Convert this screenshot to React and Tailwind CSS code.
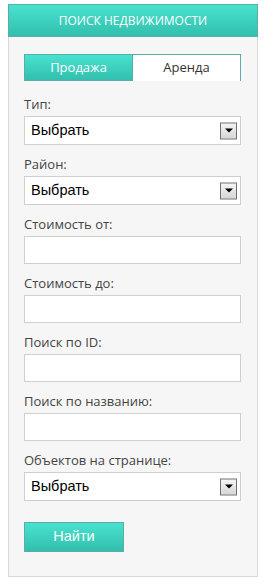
import React from 'react';

const labelFont = { fontFamily: '"Open Sans", Tahoma, "DejaVu Sans", sans-serif' };

function Arrow() {
  return (
    <div className="absolute right-[3px] top-1/2 -translate-y-1/2 w-[17px] h-[17px] border border-[#707070] bg-gradient-to-b from-[#f4f4f4] to-[#d6d6d6] flex items-center justify-center">
      <div className="w-0 h-0 border-l-[4px] border-r-[4px] border-t-[4px] border-l-transparent border-r-transparent border-t-black" />
    </div>
  );
}

function Field({ label, select, last }) {
  return (
    <div className={last ? '' : 'mb-[11px]'}>
      <div className="h-[16px] mb-[4px] text-[13px] leading-[16px] text-[#444]" style={labelFont}>{label}</div>
      {select ? (
        <div className="relative h-[29px] bg-white border border-[#cfcfcf] flex items-center pl-[6px] text-[14.5px] text-black font-['Liberation_Sans',Arial,sans-serif]">
          Выбрать
          <Arrow />
        </div>
      ) : (
        <input className="block w-full h-[28px] bg-white border border-[#cfcfcf] outline-none" />
      )}
    </div>
  );
}

export default function App() {
  return (
    <div className="w-[264px] h-[586px] bg-white pt-[4px] px-[8px]">
      <div className="w-[250px] bg-[#f6f6f6] border-l border-r border-b border-[#d8d8d8]">
        {/* header */}
        <div className="-mx-px h-[33px] border border-[#5aaea5] bg-gradient-to-b from-[#48e2d0] to-[#33bfad] flex items-center justify-center text-white text-[12px] uppercase" style={labelFont}>
          Поиск недвижимости
        </div>

        <div className="pt-[17px] pl-[15px] pr-[16px] pb-[24px]">
          {/* tabs */}
          <div className="flex h-[27px] mb-[15px] text-[13px]" style={labelFont}>
            <div className="w-[109px] border border-[#5aaea5] bg-gradient-to-b from-[#48e2d0] to-[#33bfad] text-white flex items-center justify-center">
              Продажа
            </div>
            <div className="flex-1 border-t border-r border-[#5aaea5] bg-white text-[#333] flex items-center justify-center">
              Аренда
            </div>
          </div>

          <Field label="Тип:" select />
          <Field label="Район:" select />
          <Field label="Стоимость от:" />
          <Field label="Стоимость до:" />
          <Field label="Поиск по ID:" />
          <Field label="Поиск по названию:" />
          <Field label="Объектов на странице:" select last />

          <button className="mt-[21px] w-[100px] h-[30px] border border-[#5aaea5] bg-gradient-to-b from-[#48e2d0] to-[#33bfad] text-white text-[14.5px] font-['Liberation_Sans',Arial,sans-serif]">
            Найти
          </button>
        </div>
      </div>
    </div>
  );
}
